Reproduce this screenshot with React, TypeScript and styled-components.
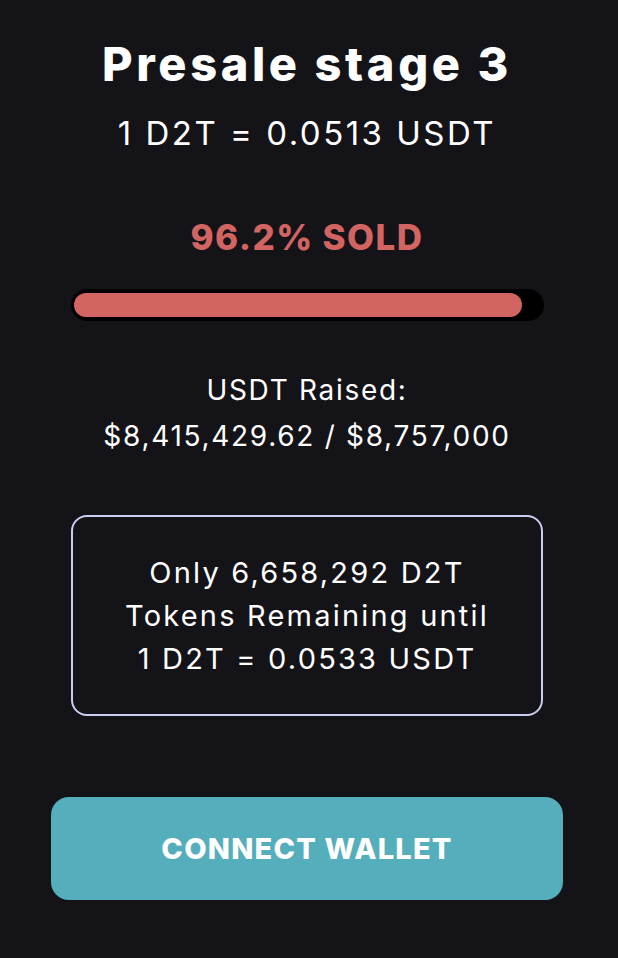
import React from "react";
import styled, { createGlobalStyle } from "styled-components";

const Global = createGlobalStyle`
  html, body {
    margin: 0;
    padding: 0;
    background: #141318;
  }
  body {
    font-family: Inter, "Open Sans", sans-serif;
    color: #ffffff;
  }
`;

const Page = styled.main`
  width: 618px;
  min-height: 958px;
  box-sizing: border-box;
  padding: 36px 4px 0 0;
  display: flex;
  flex-direction: column;
  align-items: center;
  background: #141318;
`;

const Title = styled.h1`
  margin: 0;
  font-size: 47px;
  line-height: 56px;
  font-weight: 800;
  letter-spacing: 3.6px;
  text-align: center;
`;

const Rate = styled.div`
  margin-top: 19px;
  font-size: 33px;
  line-height: 44px;
  font-weight: 400;
  letter-spacing: 2.5px;
  text-align: center;
`;

const Sold = styled.div`
  margin-top: 60px;
  font-size: 35px;
  line-height: 44px;
  font-weight: 800;
  letter-spacing: 1.4px;
  color: #d26462;
  text-align: center;
`;

const Track = styled.div`
  margin-top: 30px;
  width: 473px;
  height: 32px;
  box-sizing: border-box;
  padding: 4px 4px 4px 3px;
  border-radius: 16px;
  background: #000000;
`;

const Fill = styled.div`
  height: 100%;
  border-radius: 12px;
  background: #d26462;
`;

const Raised = styled.div`
  margin-top: 46px;
  font-size: 28px;
  line-height: 46px;
  font-weight: 400;
  letter-spacing: 1.7px;
  text-align: center;
`;

const Notice = styled.div`
  margin-top: 56px;
  width: 472px;
  height: 201px;
  box-sizing: border-box;
  border: 2px solid #c9cdf0;
  border-radius: 16px;
  display: flex;
  align-items: center;
  justify-content: center;
  font-size: 29px;
  line-height: 43px;
  letter-spacing: 2.2px;
  text-align: center;
`;

const ConnectButton = styled.button`
  margin-top: 81px;
  width: 512px;
  height: 103px;
  border: none;
  border-radius: 18px;
  background: #54aebb;
  color: #ffffff;
  font-family: Inter, "Open Sans", sans-serif;
  font-size: 29px;
  font-weight: 800;
  letter-spacing: 1.2px;
  cursor: pointer;
`;

export default function App() {
  const percent = 96.2;
  return (
    <>
      <Global />
      <Page>
        <Title>Presale stage 3</Title>
        <Rate>1 D2T = 0.0513 USDT</Rate>
        <Sold>{percent}% SOLD</Sold>
        <Track>
          <Fill style={{ width: `${percent}%` }} />
        </Track>
        <Raised>
          USDT Raised:
          <br />
          $8,415,429.62 / $8,757,000
        </Raised>
        <Notice>
          <div>
            Only 6,658,292 D2T
            <br />
            Tokens Remaining until
            <br />1 D2T = 0.0533 USDT
          </div>
        </Notice>
        <ConnectButton>CONNECT WALLET</ConnectButton>
      </Page>
    </>
  );
}
